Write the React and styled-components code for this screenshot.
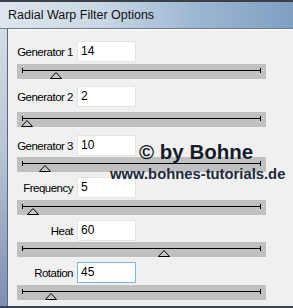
import React from "react";
import styled, { createGlobalStyle } from "styled-components";

const GlobalStyle = createGlobalStyle`
    html, body {
        margin: 0;
        padding: 0;
        background: #f0f0f0;
    }
    body {
        font-family: "Liberation Sans", Arial, sans-serif;
    }
`

const Window = styled.div`
    position: relative;
    width: 293px;
    height: 308px;
    display: flex;
    flex-direction: column;
    background: #f0f0f0;
    overflow: hidden;
    border-top: 2px solid #3a3f48;
    border-bottom: 2px solid #3a4258;
    box-sizing: border-box;
`
const TitleBar = styled.div`
    height: 27px;
    display: flex;
    align-items: center;
    padding-left: 8px;
    box-sizing: border-box;
    background: linear-gradient(90deg, #dde5ee 0%, #c9d7e4 35%, #9fb8d2 65%, #7f9fc2 100%);
    border-bottom: 1px solid #6f7f90;
    font-size: 12.5px;
    color: #111;
`
const Body = styled.div`
    flex: 1;
    display: flex;
    flex-direction: row;
`
const LeftFrame = styled.div`
    width: 7px;
    background: linear-gradient(180deg, #d3dde8 0%, #b6c4d6 45%, #7d8fb0 100%);
    border-right: 1px solid #5d6777;
`
const Content = styled.div`
    flex: 1;
    background: #f0f0f0;
    border-top: 1px solid #fafafa;
    padding-top: 11px;
    padding-left: 9px;
    display: flex;
    flex-direction: column;
`
const FieldRow = styled.div`
    display: flex;
    flex-direction: row;
    align-items: center;
    margin-top: ${(p) => p.$top}px;
    height: 21px;
`
const Label = styled.div`
    width: 56px;
    padding-right: 4px;
    display: flex;
    justify-content: flex-end;
    font-size: 11.5px;
    letter-spacing: -0.5px;
    color: #000;
    white-space: nowrap;
`
const ValueBox = styled.div`
    width: 59px;
    height: 21px;
    box-sizing: border-box;
    background: #fff;
    border: 1px solid ${(p) => (p.$focused ? "#7eb4ea" : "#e4e4e4")};
    padding: 2px 0 0 3px;
    font-size: 12px;
    color: #000;
`
const Track = styled.div`
    position: relative;
    width: 249px;
    height: 15px;
    background: #c0c0c0;
    margin-top: ${(p) => p.$top}px;
`
const TrackLine = styled.div`
    position: absolute;
    left: 5px;
    right: 5px;
    top: 6px;
    height: 1px;
    background: #000;
    &::before, &::after {
        content: "";
        position: absolute;
        top: -2px;
        width: 1px;
        height: 5px;
        background: #000;
    }
    &::before { left: 0; }
    &::after { right: 0; }
`
const Thumb = styled.svg`
    position: absolute;
    top: 8px;
`
const WatermarkTitle = styled.div`
    position: absolute;
    left: 139px;
    top: 140px;
    font-family: "Liberation Sans", Arial, sans-serif;
    font-weight: bold;
    font-size: 20.5px;
    line-height: 20px;
    color: #141c2c;
    white-space: nowrap;
`
const WatermarkUrl = styled.div`
    position: absolute;
    left: 110px;
    top: 165px;
    font-family: "Liberation Sans", Arial, sans-serif;
    font-weight: bold;
    font-size: 14.8px;
    line-height: 15px;
    color: #1c2a3c;
    white-space: nowrap;
`

const fields = [
    { label: "Generator 1", value: "14", top: 0, trackTop: 2, thumb: 56 },
    { label: "Generator 2", value: "2", top: 7, trackTop: 5, thumb: 27 },
    { label: "Generator 3", value: "10", top: 8, trackTop: 1, thumb: 45 },
    { label: "Frequency", value: "5", top: 5, trackTop: 2, thumb: 33 },
    { label: "Heat", value: "60", top: 5, trackTop: 1, thumb: 164 },
    { label: "Rotation", value: "45", top: 5, trackTop: 2, thumb: 51, focused: true },
]

function Slider({ top, thumb }) {
    return (
        <Track $top={top}>
            <TrackLine />
            <Thumb width="12" height="7" viewBox="0 0 12 7" style={{ left: thumb - 17 - 6 }}>
                <polygon points="6,0.5 11.5,6.5 0.5,6.5" fill="#c8c8c8" stroke="#000" strokeWidth="1" />
            </Thumb>
        </Track>
    )
}

export default function App() {
    return (
        <>
            <GlobalStyle />
            <Window>
                <TitleBar>Radial Warp Filter Options</TitleBar>
                <Body>
                    <LeftFrame />
                    <Content>
                        {fields.map((f) => (
                            <React.Fragment key={f.label}>
                                <FieldRow $top={f.top}>
                                    <Label>{f.label}</Label>
                                    <ValueBox $focused={f.focused}>{f.value}</ValueBox>
                                </FieldRow>
                                <Slider top={f.trackTop} thumb={f.thumb} />
                            </React.Fragment>
                        ))}
                    </Content>
                </Body>
                <WatermarkTitle>© by Bohne</WatermarkTitle>
                <WatermarkUrl>www.bohnes-tutorials.de</WatermarkUrl>
            </Window>
        </>
    )
}
